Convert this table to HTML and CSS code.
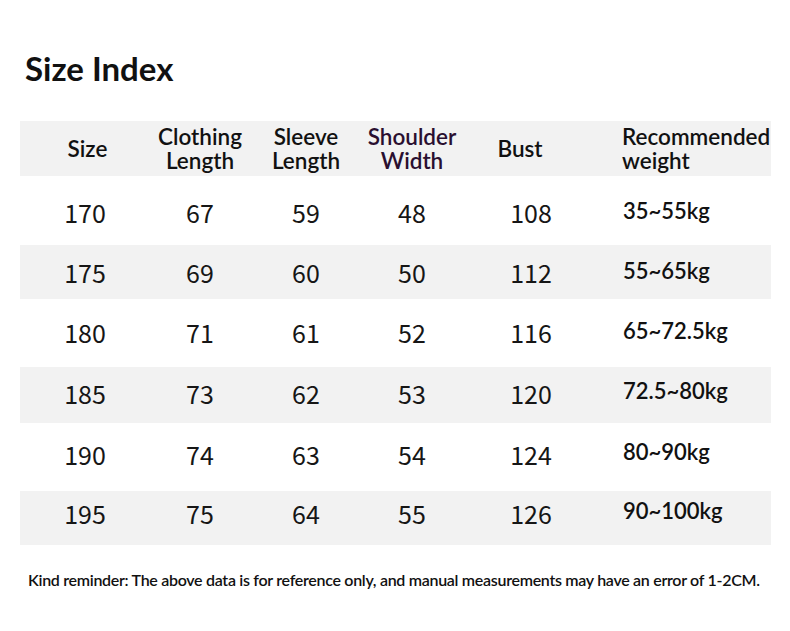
FILE: index.html
```html
<!DOCTYPE html>
<html lang="en">
<head>
<meta charset="utf-8">
<title>Size Index</title>
<link rel="stylesheet" href="styles.css">
</head>
<body>
<main class="page">
  <h1 class="title">Size Index</h1>
  <div class="table">
    <div class="row head">
      <div class="cell c1">Size</div>
      <div class="cell c2">Clothing<br>Length</div>
      <div class="cell c3">Sleeve<br>Length</div>
      <div class="cell c4 accent">Shoulder<br>Width</div>
      <div class="cell c5">Bust</div>
      <div class="cell c6">Recommended<br>weight</div>
    </div>
    <div class="row odd r1">
      <div class="cell num">170</div><div class="cell num">67</div><div class="cell num">59</div><div class="cell num">48</div><div class="cell num bust">108</div><div class="cell wt">35~55kg</div>
    </div>
    <div class="row even r2">
      <div class="cell num">175</div><div class="cell num">69</div><div class="cell num">60</div><div class="cell num">50</div><div class="cell num bust">112</div><div class="cell wt">55~65kg</div>
    </div>
    <div class="row odd r3">
      <div class="cell num">180</div><div class="cell num">71</div><div class="cell num">61</div><div class="cell num">52</div><div class="cell num bust">116</div><div class="cell wt">65~72.5kg</div>
    </div>
    <div class="row even r4">
      <div class="cell num">185</div><div class="cell num">73</div><div class="cell num">62</div><div class="cell num">53</div><div class="cell num bust">120</div><div class="cell wt">72.5~80kg</div>
    </div>
    <div class="row odd r5">
      <div class="cell num">190</div><div class="cell num">74</div><div class="cell num">63</div><div class="cell num">54</div><div class="cell num bust">124</div><div class="cell wt">80~90kg</div>
    </div>
    <div class="row even r6">
      <div class="cell num">195</div><div class="cell num">75</div><div class="cell num">64</div><div class="cell num">55</div><div class="cell num bust">126</div><div class="cell wt">90~100kg</div>
    </div>
  </div>
  <p class="note">Kind reminder: The above data is for reference only, and manual measurements may have an error of 1-2CM.</p>
</main>
</body>
</html>
```

FILE: styles.css
```css
html, body {
  margin: 0;
  padding: 0;
  background: #ffffff;
}
body {
  width: 790px;
  height: 631px;
  overflow: hidden;
  font-family: Lato, "Liberation Sans", sans-serif;
  color: #111111;
}
.page {
  padding: 48px 19px 0 20px;
}
.title {
  margin: 0 0 33px 5px;
  font-size: 33px;
  font-weight: 700;
  line-height: normal;
  color: #111;
}
.table {
  width: 751px;
  display: flex;
  flex-direction: column;
}
.row {
  display: grid;
  grid-template-columns: 130px 100px 112px 100px 128px 181px;
  align-items: center;
  box-sizing: border-box;
}
.row.head {
  height: 55px;
  background: #f2f2f2;
}
.row.odd { background: #ffffff; }
.row.even { background: #f2f2f2; }
.r1 { height: 69px; padding-top: 3px; }
.r2 { height: 54px; padding-bottom: 0; }
.r3 { height: 68px; padding-bottom: 2px; }
.r4 { height: 56px; padding-bottom: 5px; }
.r5 { height: 68px; padding-bottom: 7px; }
.r6 { height: 54px; padding-bottom: 11px; }
.cell {
  text-align: center;
}
.head .cell {
  font-size: 22.5px;
  font-weight: 600;
  line-height: 24px;
  color: #111;
}
.head .c1 { padding-left: 5px; }
.head .c5 { padding-right: 12px; }
.head .c6 {
  text-align: left;
  padding-left: 32px;
  white-space: nowrap;
}
.accent {
  color: #2a0f30 !important;
}
.num {
  font-family: "Noto Sans CJK SC", "Noto Sans", sans-serif;
  font-size: 25px;
  font-weight: 400;
  color: #161616;
}
.num.bust { padding-left: 10px; }
.wt {
  text-align: left;
  padding-left: 33px;
  font-size: 22px;
  font-weight: 600;
  color: #111;
  margin-top: -4px;
}
.note {
  margin: 25px 0 0 8px;
  font-size: 16px;
  font-weight: 600;
  letter-spacing: -0.3px;
  white-space: nowrap;
  color: #111;
}
```
